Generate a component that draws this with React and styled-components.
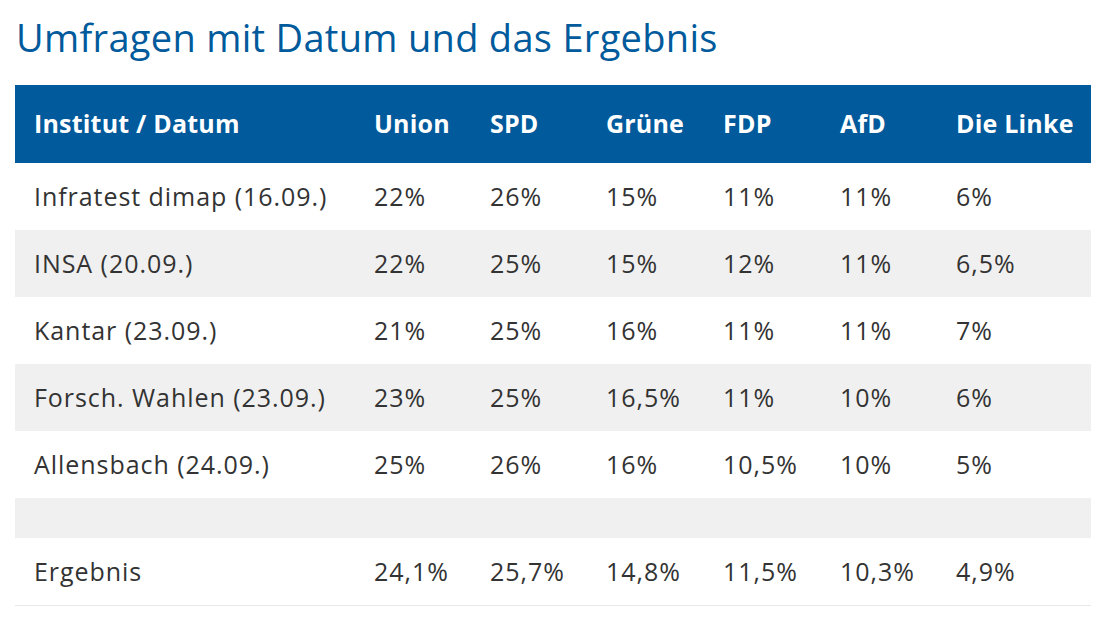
import styled, { createGlobalStyle } from 'styled-components'

const GlobalStyle = createGlobalStyle`
	body {
		margin: 0;
		background: #ffffff;
		font-family: 'Open Sans', 'Noto Sans', sans-serif;
	}
`

const Page = styled.div`
	padding: 11px 9px 0 15px;
`

const Title = styled.h2`
	margin: 0 0 22px 1px;
	font-size: 38px;
	line-height: 52px;
	font-weight: 400;
	letter-spacing: 0.3px;
	color: #005a9b;
`

const Table = styled.table`
	width: 1076px;
	border-collapse: collapse;
	table-layout: fixed;
`

const HeadRow = styled.tr`
	background: #005a9b;
	height: 78px;
`

const Th = styled.th`
	padding: 0 19px 3px;
	text-align: left;
	font-size: 25px;
	font-weight: 700;
	letter-spacing: 0.2px;
	color: #ffffff;
	white-space: nowrap;
`

const Row = styled.tr`
	height: ${(p) => (p.$empty ? '40px' : '67px')};
	background: ${(p) => (p.$shaded ? '#f0f0f0' : '#ffffff')};
	border-bottom: ${(p) => (p.$last ? '1px solid #e8e8e8' : 'none')};
`

const Td = styled.td`
	padding: 0 19px 1px;
	font-size: 25px;
	letter-spacing: 0.95px;
	color: #333333;
	white-space: nowrap;
`

const columns = ['Institut / Datum', 'Union', 'SPD', 'Grüne', 'FDP', 'AfD', 'Die Linke']
const widths = [340, 116, 116, 117, 117, 116, 154]

const rows = [
	['Infratest dimap (16.09.)', '22%', '26%', '15%', '11%', '11%', '6%'],
	['INSA (20.09.)', '22%', '25%', '15%', '12%', '11%', '6,5%'],
	['Kantar (23.09.)', '21%', '25%', '16%', '11%', '11%', '7%'],
	['Forsch. Wahlen (23.09.)', '23%', '25%', '16,5%', '11%', '10%', '6%'],
	['Allensbach (24.09.)', '25%', '26%', '16%', '10,5%', '10%', '5%'],
]

const result = ['Ergebnis', '24,1%', '25,7%', '14,8%', '11,5%', '10,3%', '4,9%']

export default function App() {
	return (
		<>
			<GlobalStyle />
			<Page>
				<Title>Umfragen mit Datum und das Ergebnis</Title>
				<Table>
					<colgroup>
						{widths.map((w, i) => (
							<col key={i} style={{ width: w }} />
						))}
					</colgroup>
					<thead>
						<HeadRow>
							{columns.map((c) => (
								<Th key={c}>{c}</Th>
							))}
						</HeadRow>
					</thead>
					<tbody>
						{rows.map((r, i) => (
							<Row key={r[0]} $shaded={i % 2 === 1}>
								{r.map((v, j) => (
									<Td key={j}>{v}</Td>
								))}
							</Row>
						))}
						<Row $empty $shaded>
							<Td colSpan={7} />
						</Row>
						<Row $last>
							{result.map((v, j) => (
								<Td key={j}>{v}</Td>
							))}
						</Row>
					</tbody>
				</Table>
			</Page>
		</>
	)
}
